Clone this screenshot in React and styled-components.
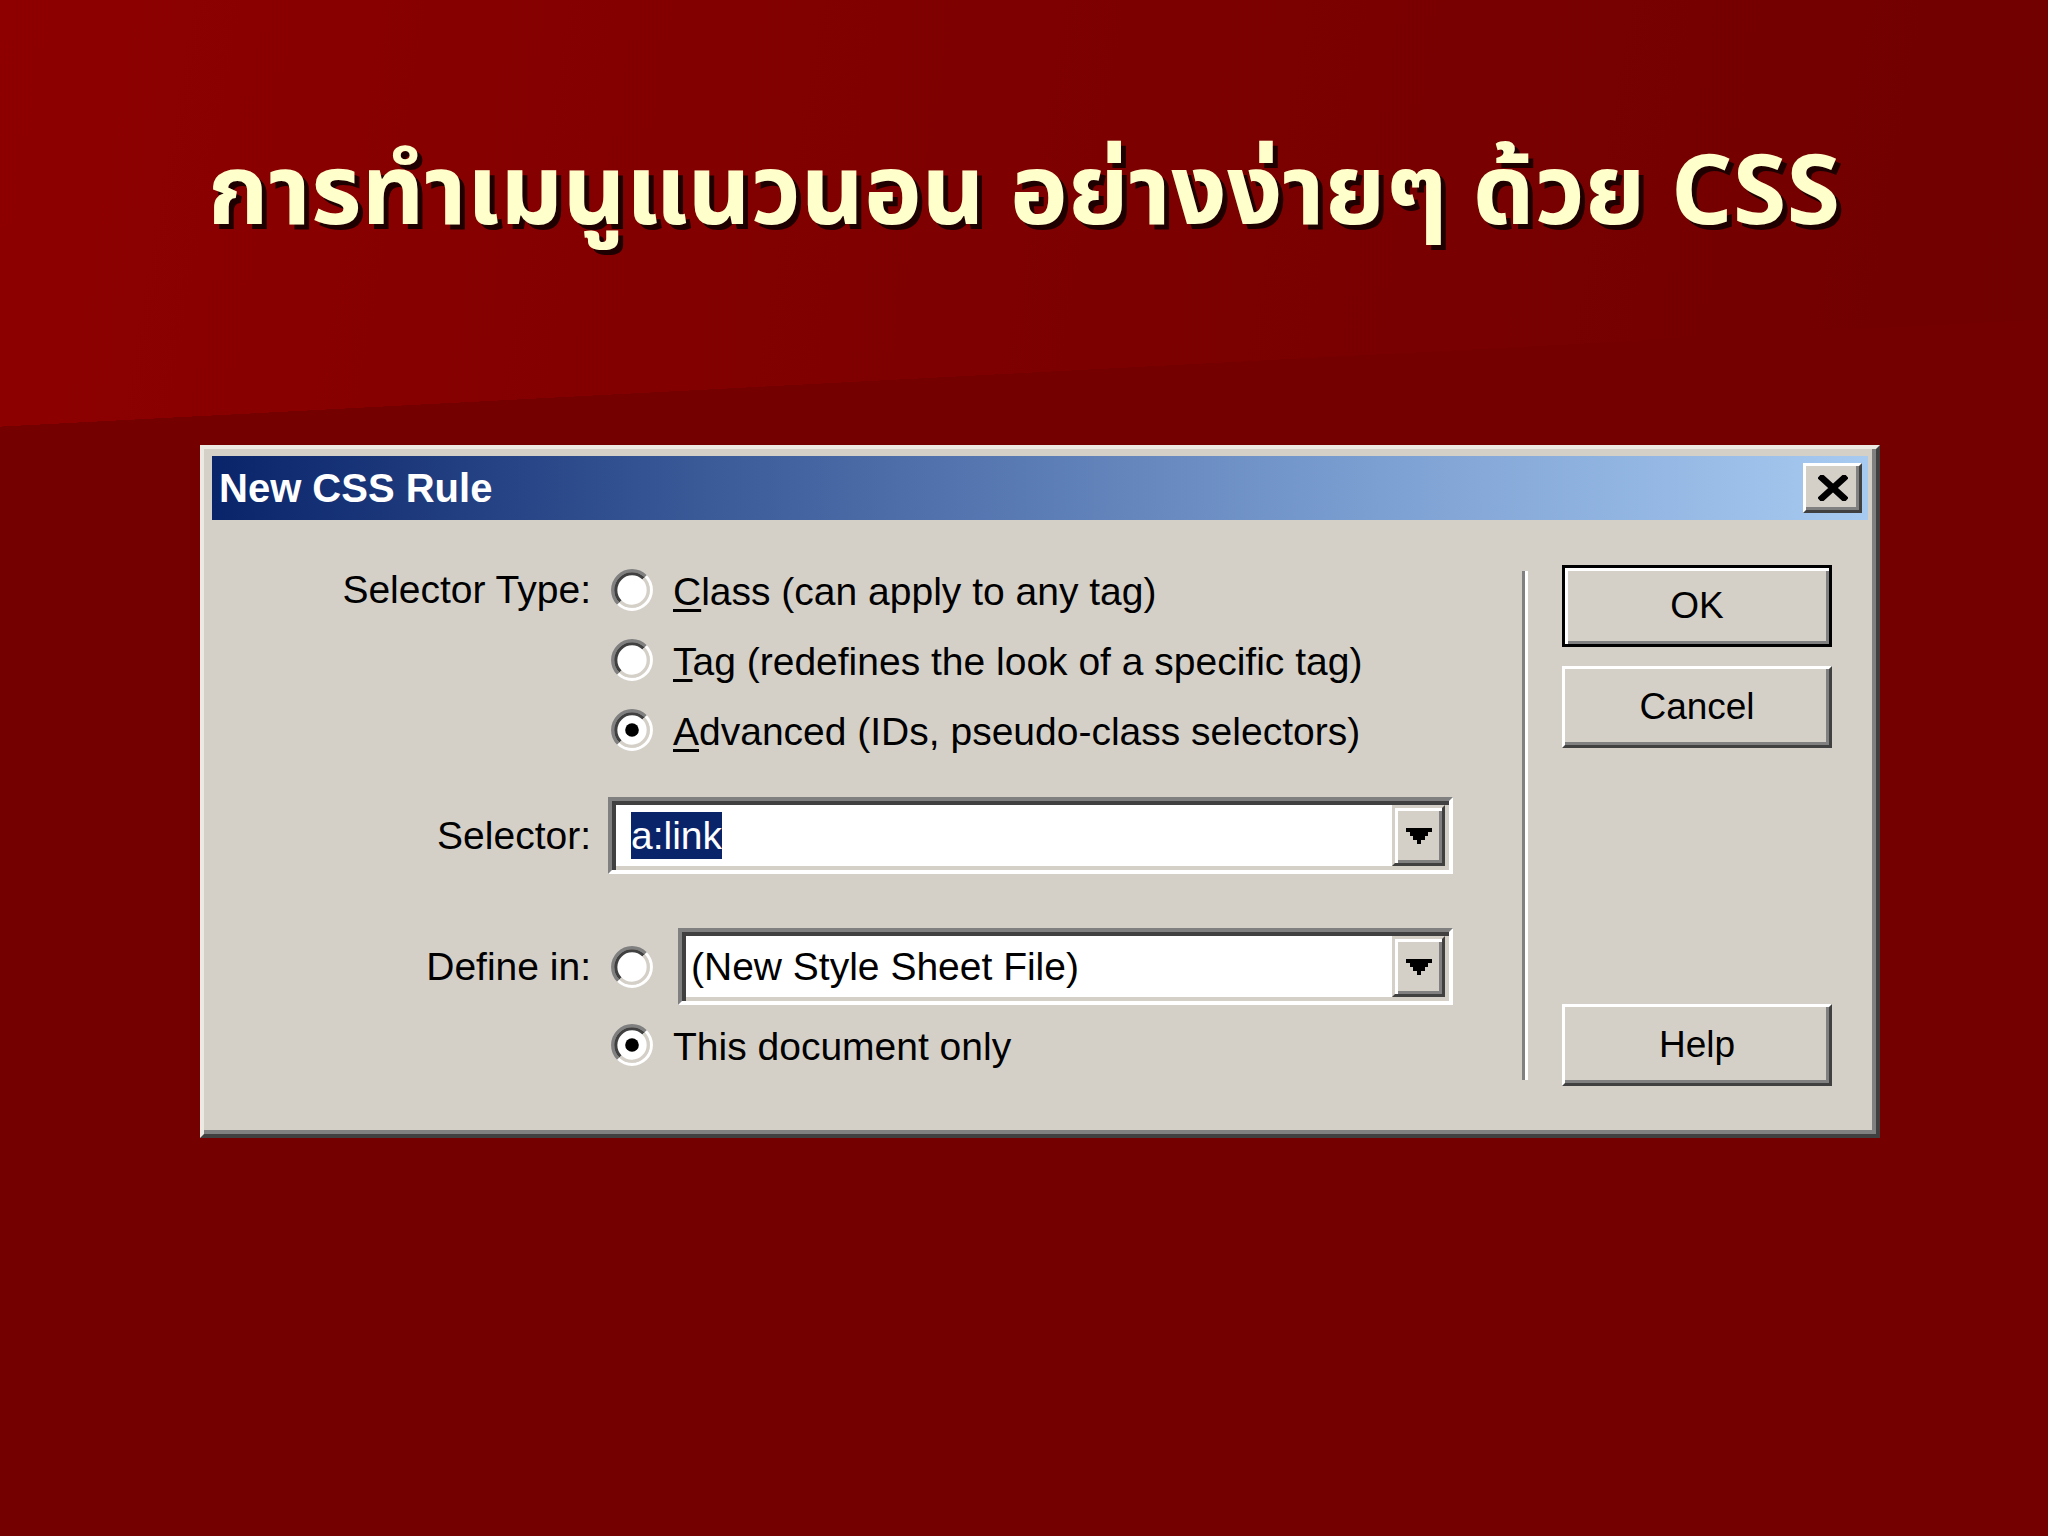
import React from "react";
import styled, { createGlobalStyle } from "styled-components";

const GlobalStyle = createGlobalStyle`
  html, body {
    margin: 0;
    padding: 0;
  }
  body {
    font-family: "Liberation Sans", Arial, sans-serif;
  }
`;

const Page = styled.div`
  min-height: 100vh;
  overflow: hidden;
  background:
    linear-gradient(177deg, transparent 0 426px, #740000 426px),
    linear-gradient(100deg, #8e0000 0%, #810000 35%, #770000 70%, #6e0000 100%);
`;

const SlideTitle = styled.h1`
  margin: 0;
  padding-top: 137px;
  text-align: center;
  font-family: Tahoma, "Noto Sans Thai", "Liberation Sans", sans-serif;
  font-size: 97.5px;
  line-height: 115px;
  font-weight: bold;
  color: #ffffcc;
  text-shadow: 5px 5px 0 #1e0000;
`;

const Window = styled.div`
  box-sizing: border-box;
  width: 1680px;
  height: 693px;
  margin: 193px 0 0 200px;
  display: flex;
  flex-direction: column;
  background: #d4d0c8;
  border: 4px solid;
  border-color: #ece9e2 #404040 #404040 #ece9e2;
  box-shadow: inset -4px -4px 0 #808080;
  padding: 7px 8px 8px 8px;
`;

const TitleBar = styled.div`
  height: 64px;
  flex-shrink: 0;
  display: flex;
  align-items: center;
  justify-content: space-between;
  padding: 0 6px 0 7px;
  background: linear-gradient(to right, #0a246a 0%, #3a5a98 30%, #7c9fd2 70%, #a6caf0 100%);
`;

const TitleText = styled.span`
  color: #fff;
  font-weight: bold;
  font-size: 40px;
  line-height: 1;
`;

const Bevel = styled.div`
  box-sizing: border-box;
  background: #d4d0c8;
  border: 3px solid;
  border-color: #fff #404040 #404040 #fff;
  box-shadow: inset -3px -3px 0 #808080;
  display: flex;
  align-items: center;
  justify-content: center;
`;

const CloseButton = styled(Bevel)`
  width: 59px;
  height: 50px;
`;

const Body = styled.div`
  flex: 1;
  display: flex;
  align-items: flex-start;
`;

const Form = styled.div`
  width: 1241px;
  margin-top: 35px;
  display: flex;
  flex-direction: column;
`;

const Row = styled.div`
  display: grid;
  grid-template-columns: 379px 42px 1fr;
  column-gap: 20px;
  align-items: center;
  height: ${(p) => p.$h || 70}px;
  margin-top: ${(p) => p.$mt || 0}px;
`;

const Label = styled.div`
  grid-column: 1;
  text-align: right;
  font-size: 39px;
  color: #000;
  white-space: nowrap;
`;

const Option = styled.div`
  grid-column: 3;
  padding-top: 3px;
  font-size: 39px;
  color: #000;
  white-space: nowrap;
`;

const AccessKey = styled.span`
  text-decoration: underline;
  text-decoration-thickness: 3px;
  text-underline-offset: 4px;
`;

const Field = styled.div`
  grid-column: ${(p) => p.$col};
  margin-left: ${(p) => p.$ml}px;
  box-sizing: border-box;
  height: 77px;
  display: flex;
  background: #fff;
  border: 4px solid;
  border-color: #808080 #fff #fff #808080;
  box-shadow: inset 4px 4px 0 #404040, inset -4px -4px 0 #d4d0c8;
  padding: 4px;
`;

const FieldValue = styled.div`
  flex: 1;
  display: flex;
  align-items: center;
  padding-left: 5px;
  font-size: 39px;
  color: #000;
  white-space: nowrap;
`;

const Highlight = styled.span`
  display: inline-block;
  margin-left: 10px;
  height: 47px;
  line-height: 47px;
  background: #0a246a;
  color: #fff;
`;

const DropButton = styled.div`
  box-sizing: border-box;
  width: 53px;
  background: #d4d0c8;
  border: 3px solid;
  border-color: #d4d0c8 #404040 #404040 #d4d0c8;
  box-shadow: inset 3px 3px 0 #fff, inset -3px -3px 0 #808080;
  display: flex;
  align-items: center;
  justify-content: center;
`;

const Separator = styled.div`
  box-sizing: border-box;
  width: 6px;
  height: 509px;
  margin: 51px 0 0 69px;
  border-left: 3px solid #808080;
  border-right: 3px solid #fff;
`;

const ButtonCol = styled.div`
  width: 270px;
  margin: 45px 0 0 34px;
  display: flex;
  flex-direction: column;
`;

const PushButton = styled(Bevel)`
  height: 82px;
  margin-top: ${(p) => p.$mt || 0}px;
  font-size: 37px;
  color: #000;
  ${(p) =>
    p.$default &&
    `
    border-color: #000;
    box-shadow: inset 3px 3px 0 #fff, inset -3px -3px 0 #808080;
  `}
`;

function Radio({ checked }) {
  const r1 = 18.5;
  const r2 = 15.5;
  const k = 0.7071;
  const arc = (r, sweep) =>
    `M ${20 - r * k} ${20 + r * k} A ${r} ${r} 0 0 ${sweep} ${20 + r * k} ${20 - r * k}`;
  return (
    <svg width="42" height="42" viewBox="0 0 40 40" style={{ gridColumn: 2 }}>
      <circle cx="20" cy="20" r="16" fill="#fff" />
      <path d={arc(r1, 1)} stroke="#808080" strokeWidth="3" fill="none" />
      <path d={arc(r1, 0)} stroke="#fff" strokeWidth="3" fill="none" />
      <path d={arc(r2, 1)} stroke="#404040" strokeWidth="3" fill="none" />
      <path d={arc(r2, 0)} stroke="#d4d0c8" strokeWidth="3" fill="none" />
      {checked && <circle cx="20" cy="20" r="6.5" fill="#000" />}
    </svg>
  );
}

function DownArrow() {
  return (
    <svg width="26" height="16" viewBox="0 0 7 4" preserveAspectRatio="none" shapeRendering="crispEdges">
      <rect x="0" y="0" width="7" height="1" fill="#000" />
      <rect x="1" y="1" width="5" height="1" fill="#000" />
      <rect x="2" y="2" width="3" height="1" fill="#000" />
      <rect x="3" y="3" width="1" height="1" fill="#000" />
    </svg>
  );
}

function CloseGlyph() {
  return (
    <svg width="30" height="26" viewBox="0 0 30 26">
      <path d="M4 3 L26 23 M26 3 L4 23" stroke="#000" strokeWidth="6.5" strokeLinecap="square" />
    </svg>
  );
}

function Dropdown({ col, ml, children }) {
  return (
    <Field $col={col} $ml={ml}>
      <FieldValue>{children}</FieldValue>
      <DropButton>
        <DownArrow />
      </DropButton>
    </Field>
  );
}

export default function App() {
  return (
    <>
      <GlobalStyle />
      <Page>
        <SlideTitle>การทำเมนูแนวนอน อย่างง่ายๆ ด้วย CSS</SlideTitle>
        <Window>
          <TitleBar>
            <TitleText>New CSS Rule</TitleText>
            <CloseButton>
              <CloseGlyph />
            </CloseButton>
          </TitleBar>
          <Body>
            <Form>
              <Row>
                <Label>Selector Type:</Label>
                <Radio />
                <Option>
                  <AccessKey>C</AccessKey>lass (can apply to any tag)
                </Option>
              </Row>
              <Row>
                <Radio />
                <Option>
                  <AccessKey>T</AccessKey>ag (redefines the look of a specific tag)
                </Option>
              </Row>
              <Row>
                <Radio checked />
                <Option>
                  <AccessKey>A</AccessKey>dvanced (IDs, pseudo-class selectors)
                </Option>
              </Row>
              <Row $h={77} $mt={32}>
                <Label>Selector:</Label>
                <Dropdown col="2 / 4" ml={-3}>
                  <Highlight>a:link</Highlight>
                </Dropdown>
              </Row>
              <Row $h={77} $mt={54}>
                <Label>Define in:</Label>
                <Radio />
                <Dropdown col="3" ml={5}>
                  (New Style Sheet File)
                </Dropdown>
              </Row>
              <Row $mt={5}>
                <Radio checked />
                <Option>This document only</Option>
              </Row>
            </Form>
            <Separator />
            <ButtonCol>
              <PushButton $default>OK</PushButton>
              <PushButton $mt={19}>Cancel</PushButton>
              <PushButton $mt={256}>Help</PushButton>
            </ButtonCol>
          </Body>
        </Window>
      </Page>
    </>
  );
}
